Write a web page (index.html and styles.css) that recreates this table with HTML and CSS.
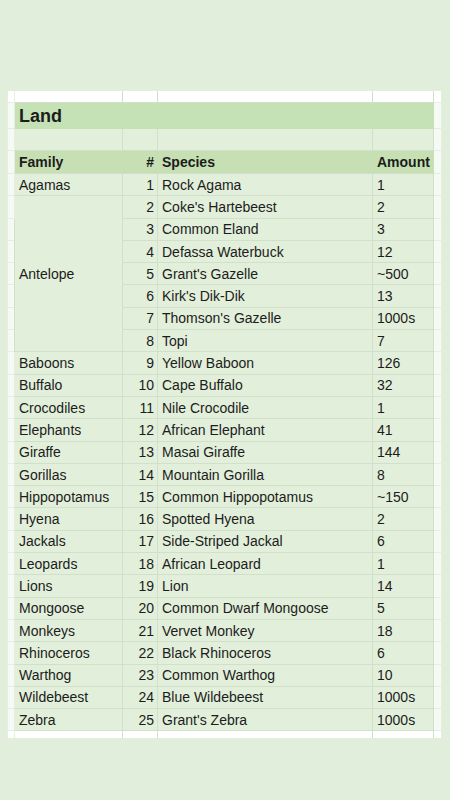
FILE: index.html
```html
<!DOCTYPE html>
<html>
<head>
<meta charset="utf-8">
<link rel="stylesheet" href="styles.css">
</head>
<body>
<div class="sheet">
<table class="grid">
<colgroup>
<col class="c-strip"><col class="c-family"><col class="c-num"><col class="c-species"><col class="c-amount"><col class="c-strip2">
</colgroup>
<tr class="r-white"><td class="strip"></td><td></td><td></td><td></td><td></td><td class="strip"></td></tr>
<tr class="r-title"><td class="strip"></td><td colspan="4" class="title">Land</td><td class="strip"></td></tr>
<tr class="r-empty"><td class="strip"></td><td></td><td></td><td></td><td></td><td class="strip"></td></tr>
<tr class="r-head"><td class="strip"></td><td>Family</td><td class="num">#</td><td>Species</td><td>Amount</td><td class="strip"></td></tr>
<tr><td class="strip"></td><td>Agamas</td><td class="num">1</td><td>Rock Agama</td><td>1</td><td class="strip"></td></tr>
<tr><td class="strip"></td><td rowspan="7">Antelope</td><td class="num">2</td><td>Coke's Hartebeest</td><td>2</td><td class="strip"></td></tr>
<tr><td class="strip"></td><td class="num">3</td><td>Common Eland</td><td>3</td><td class="strip"></td></tr>
<tr><td class="strip"></td><td class="num">4</td><td>Defassa Waterbuck</td><td>12</td><td class="strip"></td></tr>
<tr><td class="strip"></td><td class="num">5</td><td>Grant's Gazelle</td><td>~500</td><td class="strip"></td></tr>
<tr><td class="strip"></td><td class="num">6</td><td>Kirk's Dik-Dik</td><td>13</td><td class="strip"></td></tr>
<tr><td class="strip"></td><td class="num">7</td><td>Thomson's Gazelle</td><td>1000s</td><td class="strip"></td></tr>
<tr><td class="strip"></td><td class="num">8</td><td>Topi</td><td>7</td><td class="strip"></td></tr>
<tr><td class="strip"></td><td>Baboons</td><td class="num">9</td><td>Yellow Baboon</td><td>126</td><td class="strip"></td></tr>
<tr><td class="strip"></td><td>Buffalo</td><td class="num">10</td><td>Cape Buffalo</td><td>32</td><td class="strip"></td></tr>
<tr><td class="strip"></td><td>Crocodiles</td><td class="num">11</td><td>Nile Crocodile</td><td>1</td><td class="strip"></td></tr>
<tr><td class="strip"></td><td>Elephants</td><td class="num">12</td><td>African Elephant</td><td>41</td><td class="strip"></td></tr>
<tr><td class="strip"></td><td>Giraffe</td><td class="num">13</td><td>Masai Giraffe</td><td>144</td><td class="strip"></td></tr>
<tr><td class="strip"></td><td>Gorillas</td><td class="num">14</td><td>Mountain Gorilla</td><td>8</td><td class="strip"></td></tr>
<tr><td class="strip"></td><td>Hippopotamus</td><td class="num">15</td><td>Common Hippopotamus</td><td>~150</td><td class="strip"></td></tr>
<tr><td class="strip"></td><td>Hyena</td><td class="num">16</td><td>Spotted Hyena</td><td>2</td><td class="strip"></td></tr>
<tr><td class="strip"></td><td>Jackals</td><td class="num">17</td><td>Side-Striped Jackal</td><td>6</td><td class="strip"></td></tr>
<tr><td class="strip"></td><td>Leopards</td><td class="num">18</td><td>African Leopard</td><td>1</td><td class="strip"></td></tr>
<tr><td class="strip"></td><td>Lions</td><td class="num">19</td><td>Lion</td><td>14</td><td class="strip"></td></tr>
<tr><td class="strip"></td><td>Mongoose</td><td class="num">20</td><td>Common Dwarf Mongoose</td><td>5</td><td class="strip"></td></tr>
<tr><td class="strip"></td><td>Monkeys</td><td class="num">21</td><td>Vervet Monkey</td><td>18</td><td class="strip"></td></tr>
<tr><td class="strip"></td><td>Rhinoceros</td><td class="num">22</td><td>Black Rhinoceros</td><td>6</td><td class="strip"></td></tr>
<tr><td class="strip"></td><td>Warthog</td><td class="num">23</td><td>Common Warthog</td><td>10</td><td class="strip"></td></tr>
<tr><td class="strip"></td><td>Wildebeest</td><td class="num">24</td><td>Blue Wildebeest</td><td>1000s</td><td class="strip"></td></tr>
<tr><td class="strip"></td><td>Zebra</td><td class="num">25</td><td>Grant's Zebra</td><td>1000s</td><td class="strip"></td></tr>
<tr class="r-bottom"><td class="strip"></td><td></td><td></td><td></td><td></td><td class="strip"></td></tr>
</table>
</div>
</body>
</html>
```
FILE: styles.css
```css
html, body {
  margin: 0;
  padding: 0;
  background: #e0eedb;
  width: 450px;
  height: 800px;
  overflow: hidden;
}
.sheet {
  padding: 91px 0 0 7px;
}
.grid {
  border-collapse: collapse;
  table-layout: fixed;
  width: 434px;
  font-family: "Liberation Sans", Arial, sans-serif;
  font-size: 14px;
  color: #1c1c1c;
}
.c-strip { width: 7px; }
.c-family { width: 108px; }
.c-num { width: 35px; }
.c-species { width: 215px; }
.c-amount { width: 61px; }
.c-strip2 { width: 8px; }
.grid td {
  background: #e2efda;
  border: 1px solid #d2dfcb;
  padding: 0 4px 0 4px;
  height: 21.3px;
  line-height: 16px;
  white-space: nowrap;
  overflow: hidden;
  vertical-align: middle;
}
.grid td.strip {
  background: #f6faf4;
  padding: 0;
  border-color: #e6eee2;
}
.grid td.num {
  text-align: right;
  padding-right: 3px;
}
.r-white td {
  height: 11px;
  background: #ffffff;
  border-top: none;
}
.r-white td.strip { background: #ffffff; }
.r-title td {
  height: 25px;
}
.grid .r-title td.title {
  background: #c5e1b6;
  font-weight: bold;
  font-size: 18px;
  border-color: #c5e1b6;
}
.r-empty td { height: 21px; }
.r-head td {
  background: #c6e0b4;
  font-weight: bold;
  height: 22px;
  border-color: #c6e0b4;
  border-bottom-color: #d2dfcb;
}
.r-bottom td {
  height: 7px;
  background: #ffffff;
  border-bottom: none;
}
.r-bottom td.strip { background: #ffffff; }
```
